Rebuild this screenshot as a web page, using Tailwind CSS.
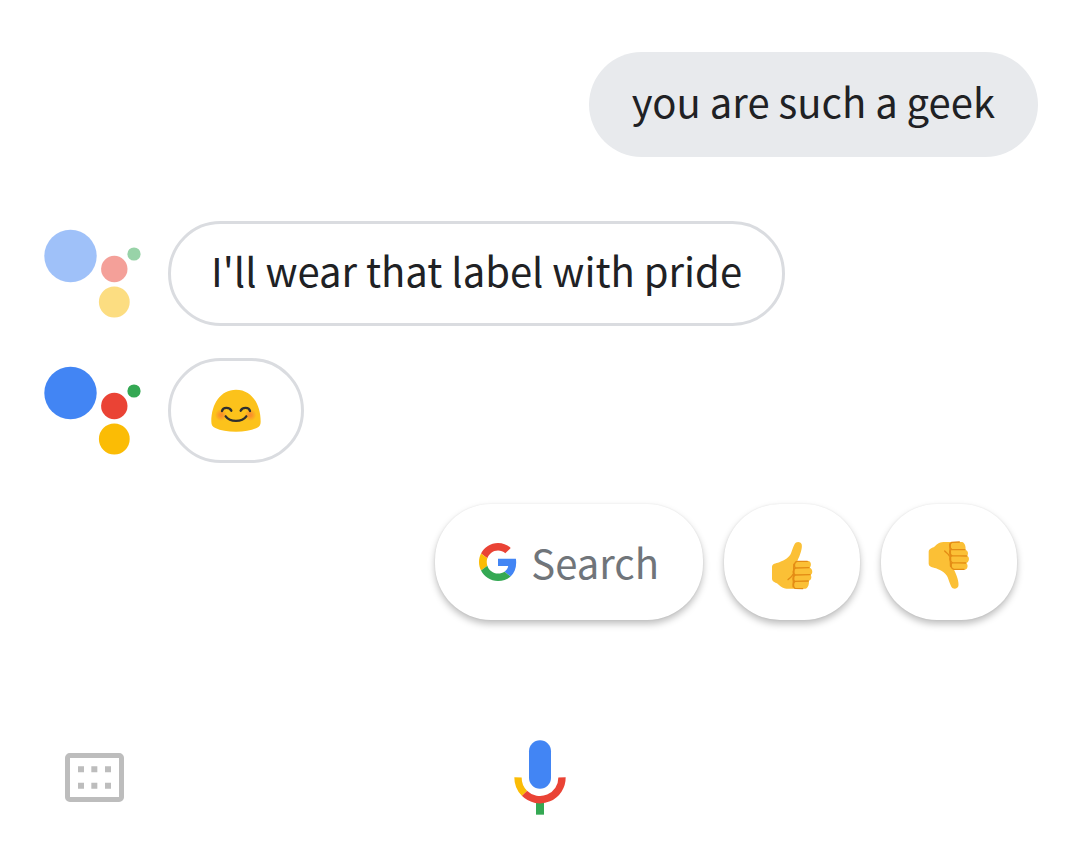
<!DOCTYPE html>
<html lang="en">
<head>
  <meta charset="UTF-8">
  <meta name="viewport" content="width=device-width, initial-scale=1.0">
  <title>Assistant</title>
  <script src="https://cdn.jsdelivr.net/npm/@tailwindcss/browser@4"></script>
</head>
<body class="bg-white font-['Noto_Sans_CJK_SC',sans-serif] text-[40px] leading-[60px] text-[#202124]">
  <div class="min-h-screen flex flex-col justify-between">
    <main class="flex flex-col pt-13 px-[42px]">
      <!-- User message -->
      <p class="self-end flex items-center h-[105px] px-[43px] pb-2 rounded-full bg-[#e8eaed]">you are such a geek</p>

      <!-- Assistant replies -->
      <div class="flex items-start mt-16">
        <svg class="w-[100px] h-[90px] mt-2 mr-[26px] opacity-50" viewBox="42 229 100 90" aria-hidden="true">
          <circle cx="70.5" cy="256" r="26.2" fill="#4285f4"/>
          <circle cx="114.3" cy="269" r="13.2" fill="#ea4335"/>
          <circle cx="134" cy="254" r="6.6" fill="#34a853"/>
          <circle cx="114.3" cy="302" r="15.4" fill="#fbbc05"/>
        </svg>
        <p class="flex items-center h-[105px] px-10 pb-2 border-3 border-[#dadce0] rounded-full">I'll wear that label with pride</p>
      </div>
      <div class="flex items-start mt-8">
        <svg class="w-[100px] h-[90px] mt-2 mr-[26px]" viewBox="42 229 100 90" aria-hidden="true">
          <circle cx="70.5" cy="256" r="26.2" fill="#4285f4"/>
          <circle cx="114.3" cy="269" r="13.2" fill="#ea4335"/>
          <circle cx="134" cy="254" r="6.6" fill="#34a853"/>
          <circle cx="114.3" cy="302" r="15.4" fill="#fbbc05"/>
        </svg>
        <div class="flex items-center h-[105px] px-10 border-3 border-[#dadce0] rounded-full">
          <svg class="w-[50px] h-[50px]" viewBox="33 17 150 150" role="img" aria-label="Smiling face">
            <defs>
              <radialGradient id="cheek">
                <stop offset="0.2" stop-color="#fa8a2c" stop-opacity="0.9"/>
                <stop offset="1" stop-color="#fa8a2c" stop-opacity="0"/>
              </radialGradient>
            </defs>
            <path fill="#fcc21b" d="M108 28C62 28 34 70 34 124C34 134 38 139 46 143C62 151 82 154 108 154C134 154 154 151 170 143C178 139 182 134 182 124C182 70 154 28 108 28Z"/>
            <circle cx="63" cy="104" r="18" fill="url(#cheek)"/>
            <circle cx="151" cy="104" r="18" fill="url(#cheek)"/>
            <g fill="none" stroke="#2f2f2f" stroke-width="7" stroke-linecap="round">
              <path d="M66 92C69 80 88 80 94 91"/>
              <path d="M122 91C128 80 147 80 150 92"/>
              <path d="M77 108C90 126 126 126 139 108"/>
            </g>
          </svg>
        </div>
      </div>

      <!-- Suggestions -->
      <div class="flex justify-end gap-[21px] mt-[41px] pr-[21px]">
        <button type="button" class="flex items-center gap-[14px] h-29 px-11 rounded-[56px] bg-white text-[#70757a] shadow-[0_4px_7px_rgba(0,0,0,0.25),0_0_2px_rgba(0,0,0,0.08)]">
          <svg class="w-[38px] h-[38px]" viewBox="0 0 48 48" aria-hidden="true">
            <path fill="#ea4335" d="M24 9.5c3.54 0 6.71 1.22 9.21 3.6l6.85-6.85C35.9 2.38 30.47 0 24 0 14.62 0 6.51 5.38 2.56 13.22l7.98 6.19C12.43 13.72 17.74 9.5 24 9.5z"/>
            <path fill="#4285f4" d="M46.98 24.55c0-1.57-.15-3.09-.38-4.55H24v9.02h12.94c-.58 2.96-2.26 5.48-4.78 7.18l7.73 6c4.51-4.18 7.09-10.36 7.09-17.65z"/>
            <path fill="#fbbc05" d="M10.53 28.59c-.48-1.45-.76-2.99-.76-4.59s.27-3.14.76-4.59l-7.98-6.19C.92 16.46 0 20.12 0 24c0 3.88.92 7.54 2.56 10.78l7.97-6.19z"/>
            <path fill="#34a853" d="M24 48c6.48 0 11.93-2.13 15.89-5.81l-7.73-6c-2.15 1.45-4.92 2.3-8.16 2.3-6.26 0-11.57-4.22-13.47-9.91l-7.98 6.19C6.51 42.62 14.62 48 24 48z"/>
          </svg>
          Search
        </button>
        <button type="button" aria-label="Thumbs up" class="flex items-center justify-center w-34 h-29 rounded-[56px] bg-white shadow-[0_4px_7px_rgba(0,0,0,0.25),0_0_2px_rgba(0,0,0,0.08)]">
          <svg class="w-[65px] h-[60px]" viewBox="0 -9 195 180" aria-hidden="true">
            <path fill="#fbc036" d="M104 27C107 20 121 18 125 28C128 40 120 62 112 78L145 78C154 79 155 93 149 98C159 101 159 117 152 119C156 126 154 136 146 137C149 145 144 160 136 161L80 161C67 161 59 152 51 145C43 142 36 140 36 130L36 96C37 86 46 86 58 82C75 75 88 67 93 55C97 44 99 37 104 27Z"/>
            <g fill="none" stroke="#e48c15" stroke-width="4" stroke-linecap="round" stroke-linejoin="round">
              <path d="M112 79C102 80 101 96 107 99L147 98M107 99C98 102 97 117 106 120L150 119M106 120C97 123 97 137 105 139L145 138M105 139C98 143 98 156 105 160L128 161M112 79L142 79"/>
              <path d="M102 88L100 155" stroke-width="5"/>
              <path d="M98 119C96 125 89 129 84 134"/>
            </g>
          </svg>
        </button>
        <button type="button" aria-label="Thumbs down" class="flex items-center justify-center w-34 h-29 rounded-[56px] bg-white shadow-[0_4px_7px_rgba(0,0,0,0.25),0_0_2px_rgba(0,0,0,0.08)]">
          <svg class="w-[65px] h-[60px]" viewBox="7 -9 195 180" aria-hidden="true">
            <path fill="#fbc036" d="M110 155C113 162 127 164 131 154C134 142 126 120 118 104L151 104C160 103 161 89 155 84C165 81 165 65 158 63C162 56 160 46 152 45C155 37 150 22 142 21L86 21C73 21 65 30 57 37C49 40 42 42 42 52L42 86C43 96 52 96 64 100C81 107 94 115 99 127C103 138 105 145 110 155Z"/>
            <g fill="none" stroke="#e48c15" stroke-width="4" stroke-linecap="round" stroke-linejoin="round">
              <path d="M118 103C108 102 107 86 113 83L153 84M113 83C104 80 103 65 112 62L156 63M112 62C103 59 103 45 111 43L151 44M111 43C104 39 104 26 111 22L134 21M118 103L148 103"/>
              <path d="M108 94L106 27" stroke-width="5"/>
              <path d="M104 63C102 57 95 53 90 48"/>
            </g>
          </svg>
        </button>
      </div>
    </main>

    <!-- Input bar -->
    <footer class="grid grid-cols-3 items-center px-[65px] pb-9">
      <button type="button" aria-label="Open keyboard" class="justify-self-start">
        <svg class="w-[59px] h-[49px]" viewBox="45 39 177 147" aria-hidden="true">
          <rect x="52.5" y="46.5" width="162" height="132" rx="7" fill="none" stroke="#bdbdbd" stroke-width="15"/>
          <path fill="#bdbdbd" d="M84 79h18v18H84zM124 79h18v18h-18zM165 79h18v18h-18zM84 128h18v18H84zM124 128h18v18h-18zM165 128h18v18h-18z"/>
        </svg>
      </button>
      <button type="button" aria-label="Speak" class="justify-self-center">
        <svg class="w-[52px] h-[75px]" viewBox="42 30 156 225" aria-hidden="true">
          <rect x="87" y="31" width="66" height="145" rx="33" fill="#4285f4"/>
          <rect x="108" y="216" width="24" height="38" fill="#34a853"/>
          <g fill="none" stroke-width="22">
            <path stroke="#ea4335" d="M186 142A66 66 0 0 1 73.3 189.7"/>
            <path stroke="#fbbc05" d="M54 142A66 66 0 0 0 73.3 189.7"/>
          </g>
        </svg>
      </button>
    </footer>
  </div>
</body>
</html>
